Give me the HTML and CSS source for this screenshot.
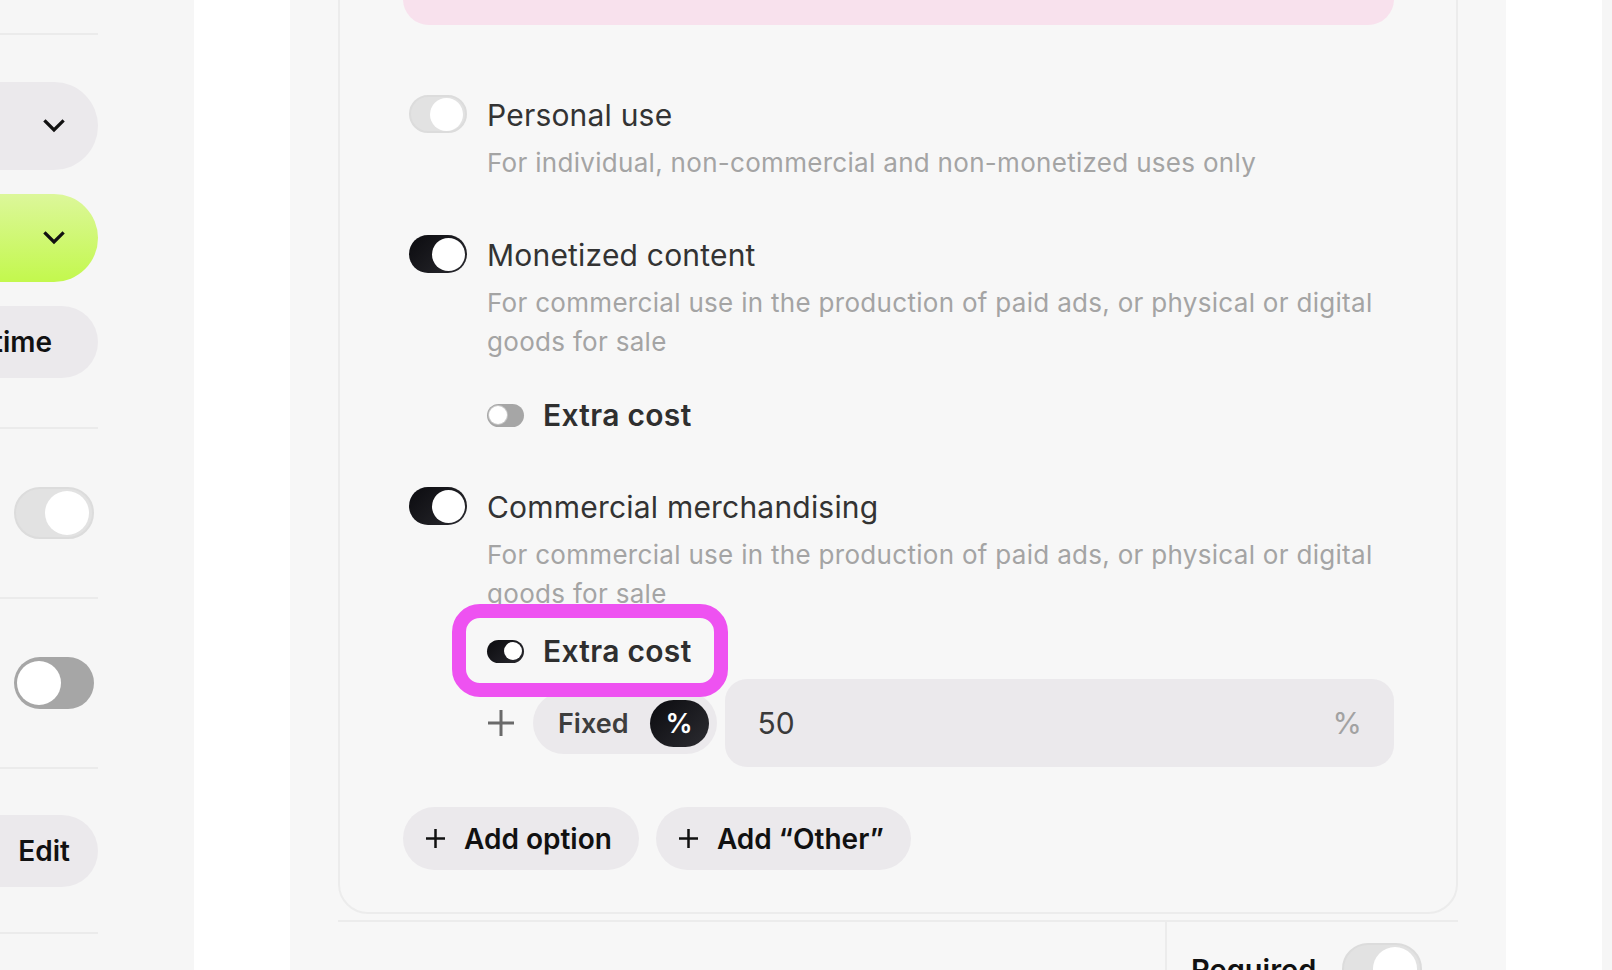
FILE: index.html
```html
<!DOCTYPE html>
<html lang="en">
  <head>
    <meta charset="UTF-8" />
    <meta name="viewport" content="width=device-width, initial-scale=1.0" />
    <title>License options</title>
    <link rel="stylesheet" href="styles.css">
  </head>
  <body>
    <!-- Colonna di sinistra (tagliata) -->
    <aside class="sidebar">
      <div class="side-sec side-pills">
        <div class="side-pill side-select">
          <svg class="chevron" width="22" height="14" viewBox="0 0 22 14"><path d="M2.5 2.5l8.5 8.5 8.5-8.5" /></svg>
        </div>
        <div class="side-pill side-select side-green">
          <svg class="chevron" width="22" height="14" viewBox="0 0 22 14"><path d="M2.5 2.5l8.5 8.5 8.5-8.5" /></svg>
        </div>
        <div class="side-pill side-text">Lifetime</div>
      </div>
      <div class="side-sec">
        <span class="switch switch-lg is-on is-muted"><span class="knob"></span></span>
      </div>
      <div class="side-sec">
        <span class="switch switch-lg is-grey"><span class="knob"></span></span>
      </div>
      <div class="side-sec side-sec-last">
        <div class="side-pill side-edit">Edit</div>
      </div>
      <div class="side-sec"></div>
    </aside>

    <div class="gutter"></div>

    <main class="main">
      <section class="card">
        <div class="notice"></div>

        <div class="option">
          <span class="switch switch-md is-on is-muted"><span class="knob"></span></span>
          <div class="option-body">
            <div class="option-title">Personal use</div>
            <p class="option-desc">For individual, non-commercial and non-monetized uses only</p>
          </div>
        </div>

        <div class="option">
          <span class="switch switch-md is-on"><span class="knob"></span></span>
          <div class="option-body">
            <div class="option-title">Monetized content</div>
            <p class="option-desc">For commercial use in the production of paid ads, or physical or digital goods for sale</p>
            <div class="extra">
              <span class="switch switch-sm is-grey"><span class="knob"></span></span>
              <span class="extra-label">Extra cost</span>
            </div>
          </div>
        </div>

        <div class="option">
          <span class="switch switch-md is-on"><span class="knob"></span></span>
          <div class="option-body">
            <div class="option-title">Commercial merchandising</div>
            <p class="option-desc">For commercial use in the production of paid ads, or physical or digital goods for sale</p>
            <div class="extra extra-open">
              <span class="switch switch-sm is-on"><span class="knob"></span></span>
              <span class="extra-label">Extra cost</span>
              <span class="highlight"></span>
            </div>
            <div class="price-row">
              <svg class="plus-icon" width="28" height="28" viewBox="0 0 28 28"><path d="M14 1v26M1 14h26" /></svg>
              <div class="segmented">
                <span class="seg-item">Fixed</span>
                <span class="seg-item seg-active">%</span>
              </div>
              <div class="price-input">
                <span class="price-value">50</span>
                <span class="price-unit">%</span>
              </div>
            </div>
          </div>
        </div>

        <div class="actions">
          <button class="add-btn">
            <svg width="19" height="19" viewBox="0 0 19 19"><path d="M9.5 0v19M0 9.5h19" /></svg>
            Add option
          </button>
          <button class="add-btn">
            <svg width="19" height="19" viewBox="0 0 19 19"><path d="M9.5 0v19M0 9.5h19" /></svg>
            Add &ldquo;Other&rdquo;
          </button>
        </div>
      </section>

      <div class="card-footer">
        <div class="footer-left"></div>
        <div class="footer-right">
          <span class="footer-label">Required</span>
          <span class="switch switch-lg is-on is-muted"><span class="knob"></span></span>
        </div>
      </div>
    </main>

    <div class="gutter"></div>
    <div class="edge"></div>
  </body>
</html>
```

FILE: styles.css
```css
body,
html {
  margin: 0;
  padding: 0;
  width: 100%;
  height: 100%;
  overflow: hidden;
}

body {
  display: flex;
  font-family: "Inter", "Helvetica Neue", Arial, sans-serif;
  color: #333;
  background-color: #f7f7f7;
}

/* Colonna di sinistra */
.sidebar {
  width: 194px;
  flex-shrink: 0;
  background-color: #f6f6f6;
  padding-top: 33px;
  box-sizing: border-box;
}

.side-sec {
  width: 98px;
  height: 170px;
  border-top: 2px solid #ebebeb;
  display: flex;
  align-items: center;
  justify-content: flex-end;
  padding-right: 4px;
  box-sizing: border-box;
}

.side-pills {
  height: auto;
  flex-direction: column;
  align-items: stretch;
  gap: 24px;
  padding: 47px 0 49px;
}

.side-sec-last {
  height: 165px;
  padding-right: 0;
}

.side-pill {
  margin-left: -140px;
  height: 88px;
  border-radius: 44px;
  background-color: #ebe9ec;
  display: flex;
  align-items: center;
  justify-content: flex-end;
  box-sizing: border-box;
}

.side-select {
  padding-right: 33px;
}

.side-green {
  background: linear-gradient(180deg, #dcf79a 0%, #c3f84d 100%);
}

.side-text,
.side-edit {
  height: 72px;
  border-radius: 36px;
  font-size: 28px;
  font-weight: 600;
  color: #111;
}

.side-text {
  padding-right: 46px;
}

.side-edit {
  width: 238px;
  padding-right: 28px;
}

.chevron path {
  fill: none;
  stroke: #111;
  stroke-width: 3.2;
  stroke-linecap: square;
}

.gutter {
  width: 96px;
  flex-shrink: 0;
  background-color: #fff;
}

.edge {
  flex: 1;
  background-color: #f6f6f6;
}

/* Interruttori */
.switch {
  display: inline-flex;
  align-items: center;
  justify-content: flex-start;
  flex-shrink: 0;
  box-sizing: border-box;
  background-color: #a6a6a6;
}

.switch .knob {
  display: block;
  border-radius: 50%;
  background-color: #fff;
}

.switch.is-on {
  justify-content: flex-end;
  background: linear-gradient(135deg, #0b0b0f 0%, #2a2a2f 100%);
}

.switch.is-muted {
  background: #e2e2e2;
  border: 2px solid #dcdcdc;
}

.switch-lg {
  width: 80px;
  height: 52px;
  border-radius: 26px;
  padding: 0 3px;
}

.switch-lg .knob {
  width: 44px;
  height: 44px;
}

.switch-md {
  width: 58px;
  height: 38px;
  border-radius: 19px;
  padding: 0 2px;
  margin-top: -1px;
}

.switch-md .knob {
  width: 33px;
  height: 33px;
}

.switch-sm {
  width: 37px;
  height: 23px;
  border-radius: 12px;
  padding: 0 2px;
}

.switch-sm .knob {
  width: 18px;
  height: 18px;
}

.switch-sm.is-grey .knob {
  box-shadow: 0 0 0 1px #c8c8c8;
}

/* Colonna principale */
.main {
  width: 1216px;
  flex-shrink: 0;
  padding: 0 48px;
  box-sizing: border-box;
  background-color: #f7f7f7;
}

.card {
  margin-top: -100px;
  padding: 40px 62px 42px 63px;
  border: 2px solid #ececec;
  border-radius: 30px;
  display: flex;
  flex-direction: column;
}

.notice {
  height: 83px;
  border-radius: 26px;
  background-color: #f8e1ed;
}

.option {
  display: flex;
  align-items: flex-start;
  gap: 20px;
  padding-left: 6px;
  margin-top: 54px;
}

.notice + .option {
  margin-top: 71px;
}

.option-body {
  flex: 1;
}

.option-title {
  font-size: 30px;
  line-height: 38px;
  color: #333;
  letter-spacing: 0.2px;
}

.option-desc {
  margin: 9px 0 0;
  font-size: 26px;
  line-height: 39px;
  color: #a4a4a4;
  letter-spacing: 0.3px;
}

.extra {
  display: flex;
  align-items: center;
  gap: 19px;
  height: 38px;
  margin-top: 35px;
  position: relative;
  align-self: flex-start;
  width: max-content;
}

.extra-open {
  margin-top: 19px;
}

.extra-label {
  font-size: 30px;
  font-weight: 600;
  color: #2f2f2f;
  letter-spacing: 0.3px;
}

/* Evidenziazione */
.highlight {
  position: absolute;
  top: -28px;
  bottom: -27px;
  left: -35px;
  right: -36px;
  border: 14px solid #ee52f1;
  border-radius: 28px;
  pointer-events: none;
}

.price-row {
  display: flex;
  align-items: center;
  margin-top: 9px;
}

.plus-icon path {
  stroke: #6a6a6a;
  stroke-width: 3;
  fill: none;
}

.segmented {
  margin-left: 18px;
  height: 62px;
  border-radius: 31px;
  background-color: #ebe9ec;
  display: flex;
  align-items: center;
  padding: 0 8px 0 25px;
  gap: 21px;
}

.seg-item {
  font-size: 27px;
  font-weight: 600;
  color: #3d3d3d;
}

.seg-active {
  width: 59px;
  height: 47px;
  border-radius: 24px;
  background: linear-gradient(135deg, #0b0b0f 0%, #2c2c31 100%);
  color: #fff;
  display: flex;
  align-items: center;
  justify-content: center;
}

.price-input {
  flex: 1;
  margin-left: 8px;
  height: 88px;
  border-radius: 22px;
  background-color: #ebe9ec;
  display: flex;
  align-items: center;
  justify-content: space-between;
  padding: 0 32px 0 33px;
  font-size: 30px;
}

.price-value {
  color: #3a3a3a;
}

.price-unit {
  color: #a2a2a2;
}

.actions {
  display: flex;
  gap: 17px;
  margin-top: 40px;
}

.add-btn {
  height: 63px;
  border: none;
  border-radius: 32px;
  background-color: #ebe9ec;
  padding: 0 27px 0 23px;
  display: flex;
  align-items: center;
  gap: 19px;
  font-family: inherit;
  font-size: 28px;
  font-weight: 600;
  color: #111;
  cursor: pointer;
}

.add-btn path {
  stroke: #111;
  stroke-width: 2.5;
  fill: none;
}

/* Riga sotto la card */
.card-footer {
  margin-top: 6px;
  border-top: 2px solid #ececec;
  display: flex;
  height: 100px;
}

.footer-left {
  width: 827px;
  border-right: 2px solid #ececec;
}

.footer-right {
  flex: 1;
  display: flex;
  align-items: center;
  justify-content: space-between;
  padding: 21px 36px 0 24px;
  align-self: flex-start;
}

.footer-label {
  font-size: 29px;
  font-weight: 600;
  color: #111;
}
```
